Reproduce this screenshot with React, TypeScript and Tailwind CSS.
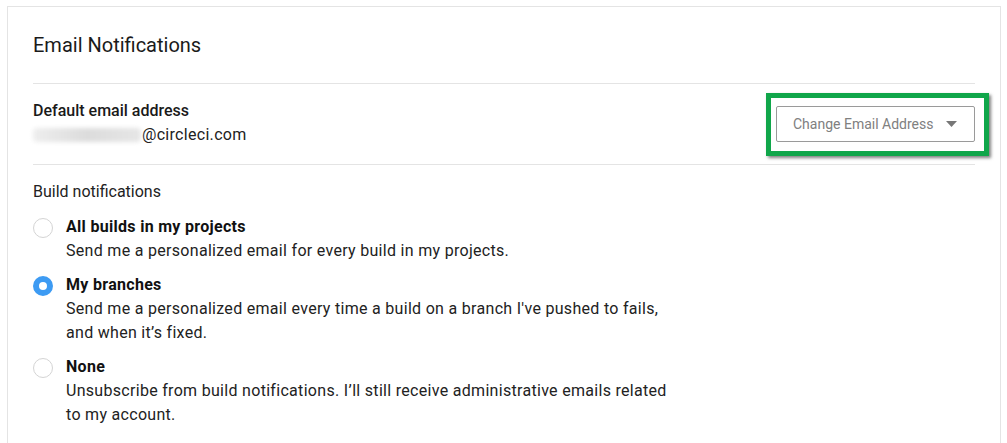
import { useState } from 'react';

const options = [
  {
    id: 'all',
    title: 'All builds in my projects',
    lines: ['Send me a personalized email for every build in my projects.'],
  },
  {
    id: 'branches',
    title: 'My branches',
    lines: [
      "Send me a personalized email every time a build on a branch I've pushed to fails,",
      'and when it\u2019s fixed.',
    ],
  },
  {
    id: 'none',
    title: 'None',
    lines: [
      'Unsubscribe from build notifications. I\u2019ll still receive administrative emails related',
      'to my account.',
    ],
  },
];

export default function App() {
  const [selected, setSelected] = useState('branches');

  return (
    <div className="min-h-[443px] bg-white pl-[7px] pt-[6px] font-['Roboto',sans-serif] text-[#222]">
      <div className="w-[994px] h-[437px] border-l border-t border-r border-[#e4e4e4] px-[25px] pt-[25px]">
        <h2 className="text-[20px] leading-[26px] text-[#1a1a1a] pb-[25px] border-b border-[#e4e4e4]">
          Email Notifications
        </h2>

        <div className="flex items-center justify-between border-b border-[#e4e4e4] pt-[17px] pb-[17px]">
          <div>
            <div className="text-[16px] leading-[20px] font-medium text-[#1a1a1a]">Default email address</div>
            <div className="mt-[2px] flex items-center text-[16px] leading-[24px] tracking-[0.3px] text-[#222]">
              <span className="inline-block h-[14px] w-[108px] rounded-sm bg-gradient-to-r from-[#eeeeee] via-[#dcdcdc] to-[#e6e6e6] blur-[2px]" />
              <span className="ml-[1px]">@circleci.com</span>
            </div>
          </div>

          <div className="relative">
            <button className="flex h-[36px] w-[199px] items-center justify-between border border-[#9a9a9a] rounded-[2px] bg-white pl-[16px] pr-[17px] text-[14px] text-[#808080]">
              <span>Change Email Address</span>
              <svg width="11" height="6" viewBox="0 0 11 6">
                <path d="M0 0h11L5.5 6z" fill="#777" />
              </svg>
            </button>
            <div className="pointer-events-none absolute left-[-10px] top-[-13px] h-[63px] w-[223px] border-[5px] border-[#10a64a] shadow-[2px_2px_3px_rgba(0,0,0,0.5)]" />
          </div>
        </div>

        <div className="pt-[16px]">
          <div className="text-[16px] leading-[22px] text-[#222]">Build notifications</div>
          <div className="mt-[12px] flex flex-col gap-[10px]">
            {options.map((o) => (
              <label key={o.id} className="flex cursor-pointer items-start" onClick={() => setSelected(o.id)}>
                <span
                  className={`mt-[3px] h-[20px] w-[20px] shrink-0 rounded-full ${
                    selected === o.id ? 'border-[6px] border-[#3d9bf3] bg-white' : 'border border-[#d4d4d4] bg-white'
                  }`}
                />
                <span className="ml-[13px] tracking-[0.3px]">
                  <span className="block text-[16px] leading-[24px] font-bold text-[#111]">{o.title}</span>
                  {o.lines.map((l) => (
                    <span key={l} className="block text-[16px] leading-[24px] text-[#222]">
                      {l}
                    </span>
                  ))}
                </span>
              </label>
            ))}
          </div>
        </div>
      </div>
    </div>
  );
}
